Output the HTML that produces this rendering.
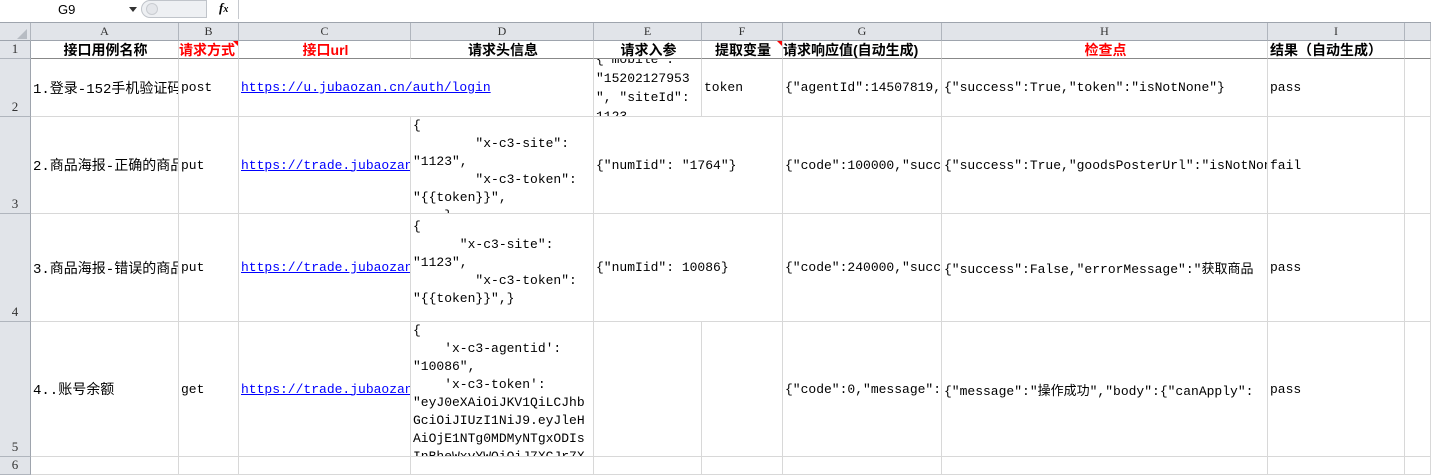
<!DOCTYPE html>
<html><head><meta charset="utf-8"><style>
body{margin:0;width:1431px;height:476px;overflow:hidden;background:#fff;position:relative;font-family:"Liberation Mono","Noto Sans CJK SC",monospace;font-size:13px;color:#000}
.c{position:absolute;overflow:hidden;white-space:pre;display:flex;align-items:center;box-sizing:border-box;padding-left:2px;border-right:1px solid #d8d8d8;border-bottom:1px solid #d8d8d8}
.top{align-items:flex-start;line-height:18px}
.h{position:absolute;background:#e1e4e9;border-right:1px solid #b0b5bd;border-bottom:1px solid #9ea4ad;box-sizing:border-box;display:flex;justify-content:center;align-items:center;color:#333;font-size:12px;font-family:"Liberation Serif",serif}
.rn{position:absolute;left:0;width:31px;background:#e1e4e9;border-right:1px solid #9ea4ad;border-bottom:1px solid #b0b5bd;box-sizing:border-box;display:flex;justify-content:center;align-items:flex-end;color:#333;font-size:13px;font-family:"Liberation Serif",serif;padding-bottom:1px}
.b{font-weight:bold;justify-content:center;font-family:"Liberation Sans","Noto Sans CJK SC",sans-serif;font-size:14px}
.r{color:#f00}
a{color:#00f;text-decoration:underline}
.tri{position:absolute;width:0;height:0;border-top:5px solid #f00;border-left:5px solid transparent}
</style></head><body>
<div style="position:absolute;left:0;top:0;width:1431px;height:19px;background:#fff;border-bottom:1px solid #c6c9ce"></div>
<div style="position:absolute;left:58px;top:2px;font-size:13px;font-family:'Liberation Sans',sans-serif">G9</div>
<div style="position:absolute;left:129px;top:7px;border-top:5px solid #333;border-left:4px solid transparent;border-right:4px solid transparent"></div>
<div style="position:absolute;left:141px;top:0;width:66px;height:18px;background:#eef0f3;border-radius:9px 0 0 9px;border:1px solid #c0c4ca;box-sizing:border-box"></div>
<div style="position:absolute;left:146px;top:3px;width:10px;height:10px;border-radius:6px;background:#e4e6ea;border:1px solid #c9ccd1"></div>
<div style="position:absolute;left:219px;top:0;font-family:'Liberation Serif',serif;font-style:italic;font-weight:bold;font-size:13px">f<span style="font-size:10px">x</span></div>
<div style="position:absolute;left:238px;top:0;width:1px;height:19px;background:#c6c9ce"></div>
<div style="position:absolute;left:0;top:19px;width:1431px;height:3px;background:#fff;border-bottom:1px solid #9ea4ad"></div>
<div class="h" style="left:0;top:23px;width:31px;height:18px"><div style="width:0;height:0;border-bottom:10px solid #b7bcc3;border-left:10px solid transparent;margin:4px 0 0 14px"></div></div>
<div class="h" style="left:31px;top:23px;width:148px;height:18px">A</div>
<div class="h" style="left:179px;top:23px;width:60px;height:18px">B</div>
<div class="h" style="left:239px;top:23px;width:172px;height:18px">C</div>
<div class="h" style="left:411px;top:23px;width:183px;height:18px">D</div>
<div class="h" style="left:594px;top:23px;width:108px;height:18px">E</div>
<div class="h" style="left:702px;top:23px;width:81px;height:18px">F</div>
<div class="h" style="left:783px;top:23px;width:159px;height:18px">G</div>
<div class="h" style="left:942px;top:23px;width:326px;height:18px">H</div>
<div class="h" style="left:1268px;top:23px;width:137px;height:18px">I</div>
<div class="h" style="left:1405px;top:23px;width:26px;height:18px"></div>
<div class="rn" style="top:41px;height:18px">1</div>
<div class="rn" style="top:59px;height:58px">2</div>
<div class="rn" style="top:117px;height:97px">3</div>
<div class="rn" style="top:214px;height:108px">4</div>
<div class="rn" style="top:322px;height:135px">5</div>
<div class="rn" style="top:457px;height:18px">6</div>
<div class="c b" style="left:31px;top:41px;width:148px;height:18px;border-bottom:1px solid #888">接口用例名称</div>
<div class="c b r" style="left:179px;top:41px;width:60px;height:18px;border-bottom:1px solid #888;justify-content:flex-start;padding-left:0">请求方式</div>
<div class="c b r" style="left:239px;top:41px;width:172px;height:18px;border-bottom:1px solid #888">接口url</div>
<div class="c b" style="left:411px;top:41px;width:183px;height:18px;border-bottom:1px solid #888">请求头信息</div>
<div class="c b" style="left:594px;top:41px;width:108px;height:18px;border-bottom:1px solid #888">请求入参</div>
<div class="c b" style="left:702px;top:41px;width:81px;height:18px;border-bottom:1px solid #888">提取变量</div>
<div class="c b" style="left:783px;top:41px;width:159px;height:18px;border-bottom:1px solid #888;justify-content:flex-start;padding-left:0">请求响应值(自动生成)</div>
<div class="c b r" style="left:942px;top:41px;width:326px;height:18px;border-bottom:1px solid #888">检查点</div>
<div class="c b" style="left:1268px;top:41px;width:137px;height:18px;border-bottom:1px solid #888;justify-content:flex-start">结果（自动生成）</div>
<div class="c" style="left:1405px;top:41px;width:26px;height:18px;border-bottom:1px solid #888"></div>
<div class="tri" style="left:233px;top:41px"></div>
<div class="tri" style="left:777px;top:41px"></div>
<div class="c" style="left:31px;top:59px;width:148px;height:58px;font-size:14px">1.登录-152手机验证码</div>
<div class="c" style="left:179px;top:59px;width:60px;height:58px">post</div>
<div class="c" style="left:239px;top:59px;width:172px;height:58px;overflow:visible;border-right:none"><a>https://u.jubaozan.cn/auth/login</a></div>
<div class="c" style="left:411px;top:59px;width:183px;height:58px"></div>
<div class="c" style="left:594px;top:59px;width:108px;height:58px;line-height:19px;background:#fff">{ mobile :
"15202127953
", "siteId":
1123</div>
<div class="c" style="left:702px;top:59px;width:81px;height:58px">token</div>
<div class="c" style="left:783px;top:59px;width:159px;height:58px">{"agentId":14507819,</div>
<div class="c" style="left:942px;top:59px;width:326px;height:58px">{"success":True,"token":"isNotNone"}</div>
<div class="c" style="left:1268px;top:59px;width:137px;height:58px">pass</div>
<div class="c" style="left:1405px;top:59px;width:26px;height:58px"></div>
<div class="c" style="left:31px;top:117px;width:148px;height:97px;font-size:14px">2.商品海报-正确的商品</div>
<div class="c" style="left:179px;top:117px;width:60px;height:97px">put</div>
<div class="c" style="left:239px;top:117px;width:172px;height:97px"><a>https://trade.jubaozan.cn</a></div>
<div class="c top" style="left:411px;top:117px;width:183px;height:97px">{
        "x-c3-site":
"1123",
        "x-c3-token":
"{{token}}",
    }</div>
<div class="c" style="left:594px;top:117px;width:108px;height:97px;overflow:visible;border-right:none">{"numIid": "1764"}</div>
<div class="c" style="left:702px;top:117px;width:81px;height:97px"></div>
<div class="c" style="left:783px;top:117px;width:159px;height:97px">{"code":100000,"success"</div>
<div class="c" style="left:942px;top:117px;width:326px;height:97px">{"success":True,"goodsPosterUrl":"isNotNone"}</div>
<div class="c" style="left:1268px;top:117px;width:137px;height:97px">fail</div>
<div class="c" style="left:1405px;top:117px;width:26px;height:97px"></div>
<div class="c" style="left:31px;top:214px;width:148px;height:108px;font-size:14px">3.商品海报-错误的商品</div>
<div class="c" style="left:179px;top:214px;width:60px;height:108px">put</div>
<div class="c" style="left:239px;top:214px;width:172px;height:108px"><a>https://trade.jubaozan.cn</a></div>
<div class="c top" style="left:411px;top:214px;width:183px;height:108px;padding-top:4px">{
      "x-c3-site":
"1123",
        "x-c3-token":
"{{token}}",}</div>
<div class="c" style="left:594px;top:214px;width:108px;height:108px;overflow:visible;border-right:none">{"numIid": 10086}</div>
<div class="c" style="left:702px;top:214px;width:81px;height:108px"></div>
<div class="c" style="left:783px;top:214px;width:159px;height:108px">{"code":240000,"success"</div>
<div class="c" style="left:942px;top:214px;width:326px;height:108px">{"success":False,"errorMessage":"获取商品</div>
<div class="c" style="left:1268px;top:214px;width:137px;height:108px">pass</div>
<div class="c" style="left:1405px;top:214px;width:26px;height:108px"></div>
<div class="c" style="left:31px;top:322px;width:148px;height:135px;font-size:14px">4..账号余额</div>
<div class="c" style="left:179px;top:322px;width:60px;height:135px">get</div>
<div class="c" style="left:239px;top:322px;width:172px;height:135px"><a>https://trade.jubaozan.cn</a></div>
<div class="c top" style="left:411px;top:322px;width:183px;height:135px">{
    'x-c3-agentid':
"10086",
    'x-c3-token':
"eyJ0eXAiOiJKV1QiLCJhb
GciOiJIUzI1NiJ9.eyJleH
AiOjE1NTg0MDMyNTgxODIs
InBheWxvYWQiOiJ7XCJr7X</div>
<div class="c" style="left:594px;top:322px;width:108px;height:135px"></div>
<div class="c" style="left:702px;top:322px;width:81px;height:135px"></div>
<div class="c" style="left:783px;top:322px;width:159px;height:135px">{"code":0,"message":{</div>
<div class="c" style="left:942px;top:322px;width:326px;height:135px">{"message":"操作成功","body":{"canApply":</div>
<div class="c" style="left:1268px;top:322px;width:137px;height:135px">pass</div>
<div class="c" style="left:1405px;top:322px;width:26px;height:135px"></div>
<div class="c" style="left:31px;top:457px;width:148px;height:18px"></div>
<div class="c" style="left:179px;top:457px;width:60px;height:18px"></div>
<div class="c" style="left:239px;top:457px;width:172px;height:18px"></div>
<div class="c" style="left:411px;top:457px;width:183px;height:18px"></div>
<div class="c" style="left:594px;top:457px;width:108px;height:18px"></div>
<div class="c" style="left:702px;top:457px;width:81px;height:18px"></div>
<div class="c" style="left:783px;top:457px;width:159px;height:18px"></div>
<div class="c" style="left:942px;top:457px;width:326px;height:18px"></div>
<div class="c" style="left:1268px;top:457px;width:137px;height:18px"></div>
<div class="c" style="left:1405px;top:457px;width:26px;height:18px"></div>
</body></html>
